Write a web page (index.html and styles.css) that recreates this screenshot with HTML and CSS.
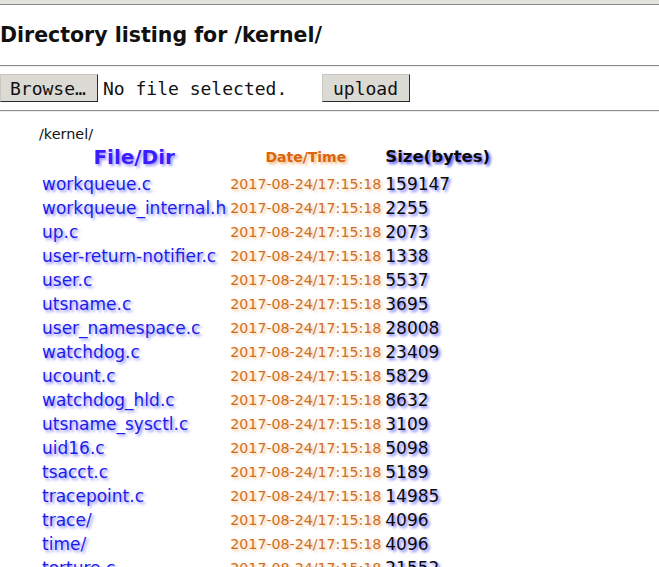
FILE: index.html
```html
<!DOCTYPE html>
<html>
<head>
<meta charset="utf-8">
<title>Directory listing for /kernel/</title>
<link rel="stylesheet" href="styles.css">
</head>
<body>
<div class="top-strip"></div>
<h2 class="title">Directory listing for /kernel/</h2>
<hr class="rule">
<form class="upload-form">
  <span class="btn btn-browse">Browse…</span>
  <span class="file-label">No file selected.</span>
  <span class="btn btn-upload">upload</span>
</form>
<hr class="rule">
<div class="listing">
  <div class="path">/kernel/</div>
  <table class="files">
    <tr class="head">
      <th class="h-name">File/Dir</th>
      <th class="h-date">Date/Time</th>
      <th class="h-size">Size(bytes)</th>
    </tr>
    <tr><td class="name"><a href="#">workqueue.c</a></td><td class="date">2017-08-24/17:15:18</td><td class="size">159147</td></tr>
    <tr><td class="name"><a href="#">workqueue_internal.h</a></td><td class="date">2017-08-24/17:15:18</td><td class="size">2255</td></tr>
    <tr><td class="name"><a href="#">up.c</a></td><td class="date">2017-08-24/17:15:18</td><td class="size">2073</td></tr>
    <tr><td class="name"><a href="#">user-return-notifier.c</a></td><td class="date">2017-08-24/17:15:18</td><td class="size">1338</td></tr>
    <tr><td class="name"><a href="#">user.c</a></td><td class="date">2017-08-24/17:15:18</td><td class="size">5537</td></tr>
    <tr><td class="name"><a href="#">utsname.c</a></td><td class="date">2017-08-24/17:15:18</td><td class="size">3695</td></tr>
    <tr><td class="name"><a href="#">user_namespace.c</a></td><td class="date">2017-08-24/17:15:18</td><td class="size">28008</td></tr>
    <tr><td class="name"><a href="#">watchdog.c</a></td><td class="date">2017-08-24/17:15:18</td><td class="size">23409</td></tr>
    <tr><td class="name"><a href="#">ucount.c</a></td><td class="date">2017-08-24/17:15:18</td><td class="size">5829</td></tr>
    <tr><td class="name"><a href="#">watchdog_hld.c</a></td><td class="date">2017-08-24/17:15:18</td><td class="size">8632</td></tr>
    <tr><td class="name"><a href="#">utsname_sysctl.c</a></td><td class="date">2017-08-24/17:15:18</td><td class="size">3109</td></tr>
    <tr><td class="name"><a href="#">uid16.c</a></td><td class="date">2017-08-24/17:15:18</td><td class="size">5098</td></tr>
    <tr><td class="name"><a href="#">tsacct.c</a></td><td class="date">2017-08-24/17:15:18</td><td class="size">5189</td></tr>
    <tr><td class="name"><a href="#">tracepoint.c</a></td><td class="date">2017-08-24/17:15:18</td><td class="size">14985</td></tr>
    <tr><td class="name"><a href="#">trace/</a></td><td class="date">2017-08-24/17:15:18</td><td class="size">4096</td></tr>
    <tr><td class="name"><a href="#">time/</a></td><td class="date">2017-08-24/17:15:18</td><td class="size">4096</td></tr>
    <tr><td class="name"><a href="#">torture.c</a></td><td class="date">2017-08-24/17:15:18</td><td class="size">21552</td></tr>
  </table>
</div>
</body>
</html>
```
FILE: styles.css
```css
html, body {
  margin: 0;
  padding: 0;
  background: #ffffff;
  color: #000000;
  font-family: "DejaVu Sans", Verdana, sans-serif;
}

.top-strip {
  height: 4px;
  background: #e3e2dd;
  border-bottom: 1px solid #8a8a8a;
}

.title {
  margin: 18px 0 0 0;
  font-size: 20.5px;
  line-height: 24px;
  font-weight: bold;
  color: #111111;
}

.rule {
  margin: 18px 0 0 0;
  height: 0;
  border: none;
  border-top: 1px solid #8a8a8a;
  border-bottom: 1px solid #efefef;
}

.upload-form + .rule {
  margin-top: 8px;
}

.upload-form {
  display: flex;
  align-items: center;
  margin: 7px 0 0 0;
  height: 28px;
  font-family: "DejaVu Sans Mono", monospace;
  font-size: 18px;
}

.btn {
  display: flex;
  align-items: center;
  box-sizing: border-box;
  height: 28px;
  background: #dcdad5;
  color: #111111;
  border: 1px solid;
  border-color: #c9c7c2 #2a2a2a #2a2a2a #c9c7c2;
}

.btn-browse {
  width: 98px;
  padding-left: 9px;
}

.file-label {
  margin-left: 5px;
  width: 219px;
  color: #111111;
}

.btn-upload {
  width: 88px;
  padding-left: 10px;
}

.listing {
  padding-left: 41px;
  margin-top: 10px;
}

.path {
  margin-left: -2px;
  font-size: 14.4px;
  line-height: 24px;
  color: #111111;
}

.files {
  border-collapse: separate;
  border-spacing: 2px 0;
  margin-left: -2px;
}

.files tr {
  height: 24px;
}

.files tr.head {
  height: 26px;
}

.files th,
.files td {
  padding: 0 1px;
  white-space: nowrap;
  vertical-align: middle;
}

.files th {
  line-height: 22px;
  padding-bottom: 4px;
}

.h-name {
  font-size: 20px;
  color: #3a1cff;
  text-shadow: 2px 2px 3px #9a94ff;
}

.h-date {
  font-size: 14px;
  color: #d9650f;
  text-shadow: 2px 2px 3px #f2b27a;
}

.h-size {
  font-size: 16.5px;
  color: #0a0a0a;
  text-shadow: 2px 2px 3px #4f4fff;
}

.name a {
  font-size: 17px;
  color: #1c1ce8;
  text-decoration: none;
  text-shadow: 2px 2px 3px #8a8aff;
}

.date {
  font-size: 14.2px;
  color: #d06e1e;
  text-shadow: 2px 2px 3px #f3c69a;
}

.size {
  font-size: 17px;
  color: #0a0a0a;
  text-shadow: 2px 2px 3px #6b6bff;
}
```
